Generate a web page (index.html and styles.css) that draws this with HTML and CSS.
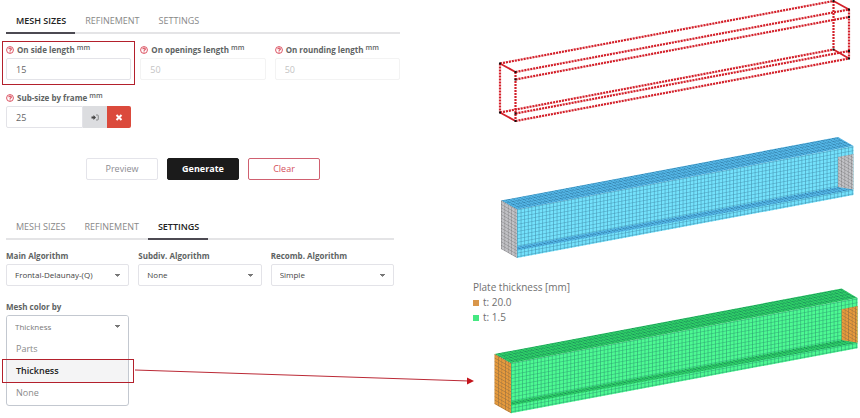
FILE: index.html
```html
<!DOCTYPE html>
<html lang="en">
<head>
<meta charset="utf-8">
<title>Mesh settings</title>
<link rel="stylesheet" href="styles.css">
</head>
<body>
<svg class="defs" aria-hidden="true">
  <defs>
    <symbol id="help" viewBox="0 0 14 14">
      <circle cx="7" cy="7" r="6" fill="none" stroke="currentColor" stroke-width="1.5"/>
      <path d="M5 5.600C5 3 9.200 3 9.200 5.500 9.200 7 7.100 7 7.100 8.400M7.100 9.600v1.600" fill="none" stroke="currentColor" stroke-width="1.9"/>
    </symbol>
    <pattern id="grid-side" width="3.6" height="3.6" patternUnits="userSpaceOnUse" patternTransform="matrix(1 -.187 0 1 517 209.5)">
      <path d="M0 0H3.6M0 0V3.6" stroke="#024" stroke-opacity=".42" stroke-width="1.1"/>
    </pattern>
    <pattern id="grid-top" width="3.6" height=".25" patternUnits="userSpaceOnUse" patternTransform="matrix(1 -.187 16 9 501 200.5)">
      <path d="M0 0V1" stroke="#024" stroke-opacity=".45" stroke-width="1"/>
      <path d="M0 0H3.6" stroke="#024" stroke-opacity=".25" stroke-width=".08"/>
    </pattern>
    <pattern id="grid-end" width="3.4" height="3.4" patternUnits="userSpaceOnUse" patternTransform="matrix(1 .5625 0 1 501 200.5)">
      <path d="M0 0H3.4M0 0V3.4" stroke="#444" stroke-opacity=".6" stroke-width=".8"/>
    </pattern>
    <g id="beam-grid">
      <path fill="url(#grid-top)" d="M501 200.5 838 137 853.5 146 517 209.5Z"/>
      <path fill="url(#grid-side)" d="M517 209.5 853.5 146V154L838 157V188L517 246.5ZM517 250.5 853.5 189.5V195L517 258Z"/>
      <path fill="url(#grid-top)" d="M517 246.5 838 187 853.5 189.5 517 250.5Z"/>
      <path fill="url(#grid-end)" d="M501 200.5 517 209.5V258L501 249ZM838 157 853.5 154V189.5L838 187Z"/>
    </g>
  </defs>
</svg>
<main class="page">
  <div class="controls">
    <section class="panel">
      <nav class="tabs">
        <button class="tab active" type="button">MESH SIZES</button>
        <button class="tab" type="button">REFINEMENT</button>
        <button class="tab" type="button">SETTINGS</button>
      </nav>
      <div class="fields sizes">
        <div class="field marked">
          <label for="side"><svg class="help"><use href="#help"/></svg>On side length <sup>mm</sup></label>
          <input id="side" type="text" value="15">
        </div>
        <div class="field">
          <label for="openings"><svg class="help"><use href="#help"/></svg>On openings length <sup>mm</sup></label>
          <input id="openings" type="text" value="50" disabled>
        </div>
        <div class="field">
          <label for="rounding"><svg class="help"><use href="#help"/></svg>On rounding length <sup>mm</sup></label>
          <input id="rounding" type="text" value="50" disabled>
        </div>
        <div class="field">
          <label for="frame"><svg class="help"><use href="#help"/></svg>Sub-size by frame <sup>mm</sup></label>
          <div class="group">
            <input id="frame" type="text" value="25">
            <button class="pick" type="button" aria-label="Pick frame">
              <svg viewBox="0 0 16 14"><path fill="#444" d="M1 5h4V2l5 5-5 5V9H1z"/><path fill="none" stroke="#666" stroke-width="1.4" d="M10 2h3q1.500 0 1.500 1.500v7Q14.500 12 13 12h-3"/></svg>
            </button>
            <button class="remove" type="button" aria-label="Remove">
              <svg viewBox="0 0 14 14"><path stroke="#fff" stroke-width="4" d="m2 2 10 10M12 2 2 12"/></svg>
            </button>
          </div>
        </div>
      </div>
      <div class="actions">
        <button class="btn" type="button">Preview</button>
        <button class="btn primary" type="button">Generate</button>
        <button class="btn danger" type="button">Clear</button>
      </div>
    </section>
    <section class="panel settings">
      <nav class="tabs">
        <button class="tab" type="button">MESH SIZES</button>
        <button class="tab" type="button">REFINEMENT</button>
        <button class="tab active" type="button">SETTINGS</button>
      </nav>
      <div class="fields algorithms">
        <div class="field">
          <label for="main-alg">Main Algorithm</label>
          <select id="main-alg"><option>Frontal-Delaunay-(Q)</option></select>
        </div>
        <div class="field">
          <label for="sub-alg">Subdiv. Algorithm</label>
          <select id="sub-alg"><option>None</option></select>
        </div>
        <div class="field">
          <label for="rec-alg">Recomb. Algorithm</label>
          <select id="rec-alg"><option>Simple</option></select>
        </div>
        <div class="field">
          <label for="color-by">Mesh color by</label>
          <div class="dropdown">
            <select id="color-by"><option>Thickness</option></select>
            <div class="menu">
              <button class="option" type="button">Parts</button>
              <button class="option selected" type="button">Thickness</button>
              <button class="option" type="button">None</button>
              <svg class="arrow" viewBox="0 0 340 20" aria-hidden="true"><path stroke="#bb2a36" d="M0 5 334 16"/><path fill="#c4141c" d="M332 12.500 339 16 332 19.500Z"/></svg>
            </div>
          </div>
        </div>
      </div>
    </section>
  </div>
  <div class="figures">
    <svg viewBox="473 0 387 130" role="img" aria-label="Beam edges with mesh nodes">
      <g fill="none" stroke="#d3202a" stroke-width="2.2" stroke-dasharray="2.1 .9">
        <path d="M500 63.500 833.500 1M515.500 72 849 9.500M515.500 79.500 849 17M500 112.500 833.500 49.500M515.500 113.500 849 51M515.500 121 849 58.500"/>
        <path d="M500 63.500V112.500M515.500 72V121M833.500 1V49.500M849 9.500V58.500"/>
      </g>
      <path stroke="#d3202a" stroke-width="1.8" d="M500 63.500 515.500 72M500 112.500 515.500 121M833.500 1 849 9.500M833.500 49.500 849 58.500"/>
      <path stroke="#111" stroke-width="2" d="M499 63.500h2M514.500 72h2M514.500 79.500h2M499 112.500h2M514.500 113.500h2M514.500 121h2M832.500 1h2M848 9.500h2M848 17h2M832.500 49.500h2M848 51h2M848 58.500h2"/>
    </svg>
    <svg viewBox="473 130 387 140" role="img" aria-label="Meshed beam">
      <path fill="#74e2fc" d="M517 209.500 853.500 146V195L517 258Z"/>
      <path fill="#52b4e4" d="M501 200.500 838 137 853.500 146 517 209.500ZM517 246.500 838 187 853.500 189.500 517 250.500Z"/>
      <path fill="#c2c2c6" d="M501 200.500 517 209.500V258L501 249ZM838 157 853.500 154V189.500L838 187Z"/>
      <use href="#beam-grid"/>
    </svg>
    <figure class="result">
      <svg viewBox="473 270 387 148" role="img" aria-label="Mesh coloured by plate thickness">
        <g transform="matrix(1.03 0 0 1.03 -21.500 147.500)">
          <path fill="#4dfa92" d="M517 209.500 853.500 146V195L517 258Z"/>
          <path fill="#2dcc66" d="M501 200.500 838 137 853.500 146 517 209.500ZM517 246.500 838 187 853.500 189.500 517 250.500Z"/>
          <path fill="#e69a3c" d="M501 200.500 517 209.500V258L501 249ZM838 157 853.500 154V189.500L838 187Z"/>
          <use href="#beam-grid"/>
        </g>
      </svg>
      <figcaption class="legend">
        <span>Plate thickness [mm]</span>
        <span class="key thick">t: 20.0</span>
        <span class="key thin">t: 1.5</span>
      </figcaption>
    </figure>
  </div>
</main>
</body>
</html>
```
FILE: styles.css
```css
* { box-sizing: border-box; }
body { margin: 0; background: #fff; color: #666; font: 8px/12px "Open Sans", sans-serif; }
button, input, select { font: inherit; color: inherit; margin: 0; }
.defs { position: absolute; width: 0; height: 0; }
.page { display: grid; grid-template-columns: 473fr 387fr; align-items: start; }
.controls { padding: 10px 73px 0 6px; }
.settings { padding: 36px 6px 0 0; }

.tabs { display: flex; border-bottom: 2px solid #e4e4e6; }
.tab { border: 0; background: none; padding: 0 9px 0 10px; height: 24px; margin-bottom: -2px; border-bottom: 2px solid transparent; font-size: 9px; color: #888; white-space: nowrap; }
.tab.active { color: #222; font-weight: 600; border-color: #4c4a52; }

.fields { display: grid; grid-template-columns: repeat(3, 1fr); column-gap: 9px; }
.sizes { padding-top: 7px; row-gap: 9px; }
.algorithms { padding-top: 7px; row-gap: 12px; }
.field { position: relative; min-width: 0; }
.field label { display: flex; align-items: center; height: 17px; font-weight: 700; white-space: pre; color: #5e6363; }
.field sup { font-size: 7px; line-height: 14px; align-self: flex-start; font-weight: 600; }
.help { width: 8px; height: 8px; margin-right: 3px; color: #d63b4c; }
.field input, .field select { display: block; width: 100%; height: 22px; padding: 0 9px; border: 1px solid #e3e3e8; border-radius: 2px; background: #fff; color: #666; }
.field input { font-size: 9px; }
.field input:disabled { color: #c4c4c4; border-color: #f3f3f3; }
.field select { appearance: none; color: #444; padding: 0 8px; background: linear-gradient(#777, #777) right 8px top 9px / 5px 1px no-repeat, linear-gradient(#777, #777) right 9px top 10px / 3px 1px no-repeat, linear-gradient(#999, #999) right 10px top 11px / 1px 1px no-repeat, #fff; }
.marked::after { content: ""; position: absolute; inset: 0 -4px -5px -4px; border: 1px solid #b3202c; pointer-events: none; }

.group { display: flex; }
.field .group input { flex: 1; min-width: 0; border-radius: 2px 0 0 2px; }
.group button { width: 24px; height: 22px; border: 0; padding: 0; display: grid; place-items: center; }
.pick { background: #dcdde0; }
.group .remove { background: #db4a3c; border-radius: 0 2px 2px 0; }
.group svg { width: 8px; height: 7px; }

.actions { display: flex; justify-content: center; gap: 9px; padding-top: 30px; }
.btn { width: 72px; height: 22px; padding: 0; border: 1px solid #e4e4ea; border-radius: 2px; background: #fff; color: #8c8c92; font-size: 9px; }
.primary { background: #1b1b1b; border-color: #1b1b1b; color: #fff; font-weight: 700; }
.danger { border-color: #d06070; color: #d4505c; }

.dropdown { position: relative; border: 1px solid #c3c8d0; border-radius: 3px; background: #fff; }
.field .dropdown select { border: 0; color: #777; }
.menu { display: flex; flex-direction: column; padding-bottom: 1px; }
.option { height: 22px; padding: 0 9px; border: 0; background: none; text-align: left; font-size: 9px; color: #8a8a8a; }
.selected { position: relative; background: #f4f4f5; color: #222; font-weight: 600; }
.selected::after { content: ""; position: absolute; inset: -1px -6px -1px -5px; border: 1px solid #b3202c; }
.arrow { position: absolute; left: 128px; top: 49px; width: 340px; height: 20px; pointer-events: none; z-index: 1; }

.figures { display: flex; flex-direction: column; }
.figures svg { display: block; width: 100%; height: auto; }
.result { display: grid; margin: 0; }
.result > * { grid-area: 1 / 1; }
.legend { display: flex; flex-direction: column; align-self: start; padding-top: 10px; font-size: 10px; line-height: 15px; color: #707070; }
.key::before { content: ""; display: inline-block; width: 6px; height: 6px; margin-right: 4px; background: #d9964a; }
.thin::before { background: #45e882; }
```
